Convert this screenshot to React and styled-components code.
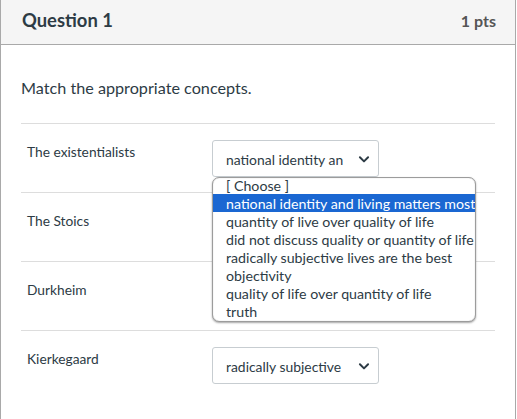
import React from "react";
import styled, { createGlobalStyle } from "styled-components";

const Global = createGlobalStyle`
  html, body { margin: 0; padding: 0; background: #fff; }
  body { font-family: Lato, "Noto Sans", sans-serif; color: #2d3b45; }
`;

const Panel = styled.div`
  width: 514px;
  min-height: 419px;
  border-left: 1px solid #a9a9a9;
  border-right: 1px solid #a9a9a9;
  box-sizing: content-box;
`;

const Header = styled.div`
  height: 44px;
  background: #f5f5f5;
  border-bottom: 1px solid #a9a9a9;
  display: flex;
  align-items: center;
  justify-content: space-between;
  padding: 0 19px 0 21px;
`;

const Title = styled.div`
  font-weight: 700;
  font-size: 18.4px;
  color: #2d3b45;
  margin-top: -4px;
`;

const Points = styled.div`
  font-weight: 700;
  font-size: 16px;
  color: #555;
  margin-top: -4px;
`;

const Body = styled.div`
  padding: 31px 20px 0 20px;
`;

const Prompt = styled.div`
  font-size: 16.2px;
  line-height: 24px;
  height: 47px;
`;

const Row = styled.div`
  border-top: 1px solid #ddd;
  height: 68px;
  display: grid;
  grid-template-columns: 191px 1fr;
  align-items: start;
`;

const Label = styled.div`
  font-size: 13.75px;
  padding: 19px 0 0 6px;
`;

const SelectWrap = styled.div`
  position: relative;
  padding-top: 16px;
`;

const SelectBox = styled.div`
  height: 35px;
  width: 145px;
  border: 1px solid #c7cdd1;
  border-radius: 3px;
  background: #fff;
  display: flex;
  align-items: center;
  justify-content: space-between;
  padding: 0 7px 0 13px;
  box-sizing: content-box;
  font-size: 13.9px;
  white-space: nowrap;
  overflow: hidden;
`;

const SelectText = styled.span`
  overflow: hidden;
  width: 125px;
  padding-top: 2px;
`;

const Chevron = () => (
  <svg width="14" height="14" viewBox="0 0 24 24" fill="none" stroke="#2d3b45" strokeWidth="3.4" strokeLinecap="round" strokeLinejoin="round">
    <path d="M5 9l7 7 7-7" />
  </svg>
);

const List = styled.div`
  position: absolute;
  top: 53px;
  left: 0;
  width: 262px;
  height: 143px;
  border: 1px solid #9c9c9c;
  border-radius: 7px;
  box-shadow: 0 1px 2px rgba(0, 0, 0, 0.35), inset 0 0 1px rgba(0,0,0,0.3);
  background: #fff;
  overflow: hidden;
  z-index: 5;
`;

const Options = styled.div`
  margin-top: -2px;
`;

const Option = styled.div`
  height: 18px;
  line-height: 19px;
  font-size: 14.2px;
  padding-left: 13px;
  white-space: nowrap;
  overflow: hidden;
  background: ${(p) => (p.$selected ? "#1a67d2" : "transparent")};
  color: ${(p) => (p.$selected ? "#fff" : "#2d3b45")};
`;

const options = [
  "[ Choose ]",
  "national identity and living matters most",
  "quantity of live over quality of life",
  "did not discuss quality or quantity of life",
  "radically subjective lives are the best",
  "objectivity",
  "quality of life over quantity of life",
  "truth",
];

const rows = [
  { label: "The existentialists", value: "national identity an", open: true },
  { label: "The Stoics", value: "", hidden: true },
  { label: "Durkheim", value: "", hidden: true },
  { label: "Kierkegaard", value: "radically subjective" },
];

export default function App() {
  return (
    <>
      <Global />
      <Panel>
        <Header>
          <Title>Question 1</Title>
          <Points>1 pts</Points>
        </Header>
        <Body>
          <Prompt>Match the appropriate concepts.</Prompt>
          {rows.map((r) => (
            <Row key={r.label}>
              <Label>{r.label}</Label>
              <SelectWrap>
                <SelectBox>
                  <SelectText>{r.value}</SelectText>
                  {!r.hidden && <Chevron />}
                </SelectBox>
                {r.open && (
                  <List>
                    <Options>
                      {options.map((o, i) => (
                        <Option key={o} $selected={i === 1}>{o}</Option>
                      ))}
                    </Options>
                  </List>
                )}
              </SelectWrap>
            </Row>
          ))}
        </Body>
      </Panel>
    </>
  );
}
